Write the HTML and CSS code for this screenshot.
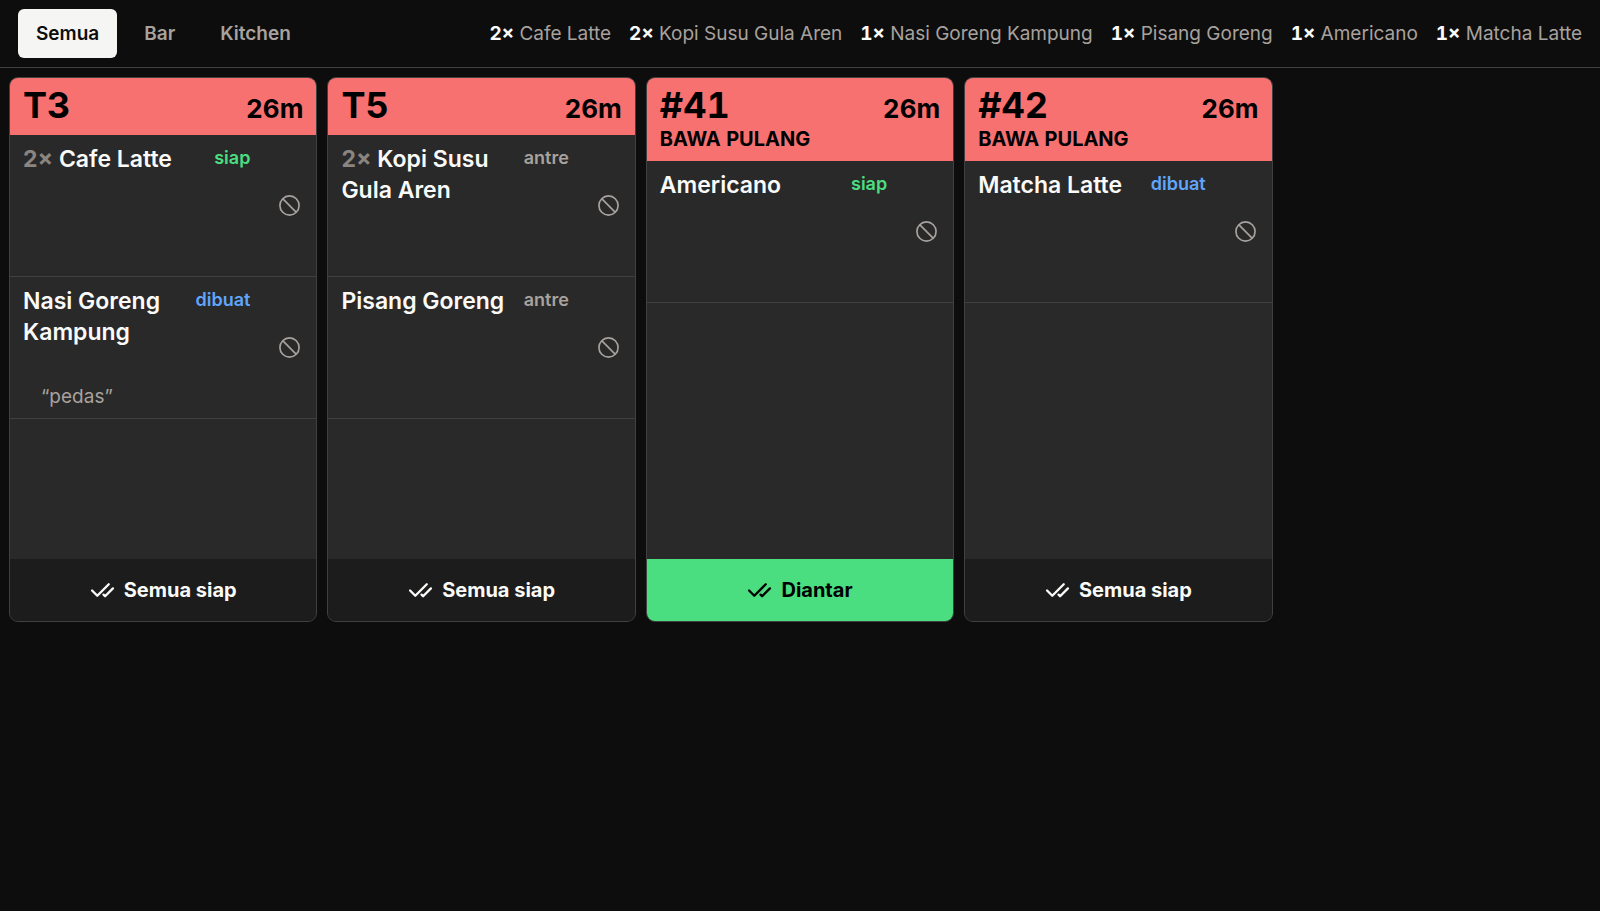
FILE: index.html
```html
<!DOCTYPE html>
<html lang="id">
<head>
<meta charset="utf-8">
<meta name="viewport" content="width=device-width, initial-scale=1">
<title>Pesanan</title>
<link rel="stylesheet" href="styles.css">
</head>
<body>
<svg class="sprite" aria-hidden="true">
  <symbol id="checks" viewBox="0 0 24 24"><path d="M18 6 7 17l-5-5M22 10l-7.500 7.500L13 16" fill="none" stroke="currentColor" stroke-width="2.250" stroke-linecap="round" stroke-linejoin="round"/></symbol>
  <symbol id="void" viewBox="0 0 24 24"><circle cx="12" cy="12" r="10" fill="none" stroke="currentColor" stroke-width="1.750"/><path d="m4.900 4.900 14.200 14.200" stroke="currentColor" stroke-width="1.750"/></symbol>
</svg>
<header class="topbar">
  <nav class="stations">
    <button class="station active" type="button">Semua</button>
    <button class="station" type="button">Bar</button>
    <button class="station" type="button">Kitchen</button>
  </nav>
  <ul class="totals">
    <li><b>2×</b> Cafe Latte</li>
    <li><b>2×</b> Kopi Susu Gula Aren</li>
    <li><b>1×</b> Nasi Goreng Kampung</li>
    <li><b>1×</b> Pisang Goreng</li>
    <li><b>1×</b> Americano</li>
    <li><b>1×</b> Matcha Latte</li>
  </ul>
</header>
<main class="tickets">
  <article class="ticket">
    <header class="head"><h2>T3</h2><time>26m</time></header>
    <ul class="items">
      <li class="item">
        <button class="line" type="button"><span class="name"><span class="qty">2×</span> Cafe Latte</span><span class="status ready">siap</span></button>
        <button class="void" type="button" aria-label="Batalkan Cafe Latte"><svg><use href="#void"/></svg></button>
      </li>
      <li class="item">
        <button class="line" type="button"><span class="name">Nasi Goreng Kampung</span><span class="status making">dibuat</span><span class="note">“pedas”</span></button>
        <button class="void" type="button" aria-label="Batalkan Nasi Goreng Kampung"><svg><use href="#void"/></svg></button>
      </li>
    </ul>
    <button class="action" type="button"><svg><use href="#checks"/></svg>Semua siap</button>
  </article>
  <article class="ticket">
    <header class="head"><h2>T5</h2><time>26m</time></header>
    <ul class="items">
      <li class="item">
        <button class="line" type="button"><span class="name"><span class="qty">2×</span> Kopi Susu Gula Aren</span><span class="status">antre</span></button>
        <button class="void" type="button" aria-label="Batalkan Kopi Susu Gula Aren"><svg><use href="#void"/></svg></button>
      </li>
      <li class="item">
        <button class="line" type="button"><span class="name">Pisang Goreng</span><span class="status">antre</span></button>
        <button class="void" type="button" aria-label="Batalkan Pisang Goreng"><svg><use href="#void"/></svg></button>
      </li>
    </ul>
    <button class="action" type="button"><svg><use href="#checks"/></svg>Semua siap</button>
  </article>
  <article class="ticket">
    <header class="head"><h2>#41</h2><time>26m</time><p>BAWA PULANG</p></header>
    <ul class="items">
      <li class="item">
        <button class="line" type="button"><span class="name">Americano</span><span class="status ready">siap</span></button>
        <button class="void" type="button" aria-label="Batalkan Americano"><svg><use href="#void"/></svg></button>
      </li>
    </ul>
    <button class="action deliver" type="button"><svg><use href="#checks"/></svg>Diantar</button>
  </article>
  <article class="ticket">
    <header class="head"><h2>#42</h2><time>26m</time><p>BAWA PULANG</p></header>
    <ul class="items">
      <li class="item">
        <button class="line" type="button"><span class="name">Matcha Latte</span><span class="status making">dibuat</span></button>
        <button class="void" type="button" aria-label="Batalkan Matcha Latte"><svg><use href="#void"/></svg></button>
      </li>
    </ul>
    <button class="action" type="button"><svg><use href="#checks"/></svg>Semua siap</button>
  </article>
</main>
</body>
</html>
```

FILE: styles.css
```css
* { box-sizing: border-box; margin: 0; padding: 0; }

body {
  background: #0d0d0d;
  color: #fafaf9;
  font-family: Inter, "Liberation Sans", sans-serif;
  font-size: 19px;
  line-height: 26px;
}

button { border: 0; background: none; color: inherit; font: inherit; cursor: pointer; }
ul { list-style: none; }
.sprite { display: none; }

.topbar {
  display: flex;
  align-items: center;
  justify-content: space-between;
  gap: 18px;
  padding: 9px 18px;
  border-bottom: 1px solid #404040;
}
.stations { display: flex; gap: 9px; }
.station {
  height: 49px;
  padding: 0 18px;
  border-radius: 6px;
  color: #a8a29e;
  font-weight: 600;
}
.station.active { background: #f5f5f4; color: #0d0d0d; }
.totals { display: flex; gap: 18px; color: #a8a29e; white-space: nowrap; }
.totals b { color: #fafaf9; font-weight: 700; font-variant-numeric: tabular-nums; }

.tickets {
  display: grid;
  grid-template-columns: repeat(5, 1fr);
  gap: 10px;
  padding: 9px;
}
.ticket {
  display: flex;
  flex-direction: column;
  overflow: hidden;
  border: 1px solid #404040;
  border-radius: 9px;
  background: #292929;
}
.head {
  display: grid;
  grid-template-columns: 1fr auto;
  align-items: baseline;
  padding: 9px 13px;
  background: #f87171;
  color: #000;
  font-weight: 700;
  font-variant-numeric: tabular-nums;
}
.head h2 { font-size: 36px; line-height: 36px; }
.head time { font-size: 26px; line-height: 35px; }
.head p { grid-column: 1 / -1; font-size: 20px; line-height: 26px; }

.items { flex: 1; min-height: 424px; }
.ticket .head:has(p) + .items { min-height: 398px; }
.item { display: flex; height: 142px; border-bottom: 1px solid #404040; }
.line {
  flex: 1;
  display: grid;
  grid-template-columns: 1fr auto;
  grid-template-rows: 1fr auto;
  column-gap: 13px;
  padding: 9px 13px 8px;
  text-align: left;
}
.name { font-size: 23px; line-height: 31px; font-weight: 600; }
.qty { color: #8a8580; font-weight: 700; }
.status { color: #a8a29e; font-size: 18px; line-height: 27px; font-weight: 600; }
.status.ready { color: #4ade80; }
.status.making { color: #60a5fa; }
.note { grid-column: 1 / -1; padding-left: 18px; color: #a8a29e; }
.void { display: flex; flex: none; align-items: center; justify-content: center; width: 53px; color: #a8a29e; }
.void svg { width: 23px; height: 23px; }

.action {
  display: flex;
  align-items: center;
  justify-content: center;
  gap: 9px;
  height: 62px;
  background: #1c1c1c;
  font-size: 20px;
  font-weight: 700;
}
.action svg { width: 25px; height: 25px; }
.action.deliver { background: #4ade80; color: #000; }
```
